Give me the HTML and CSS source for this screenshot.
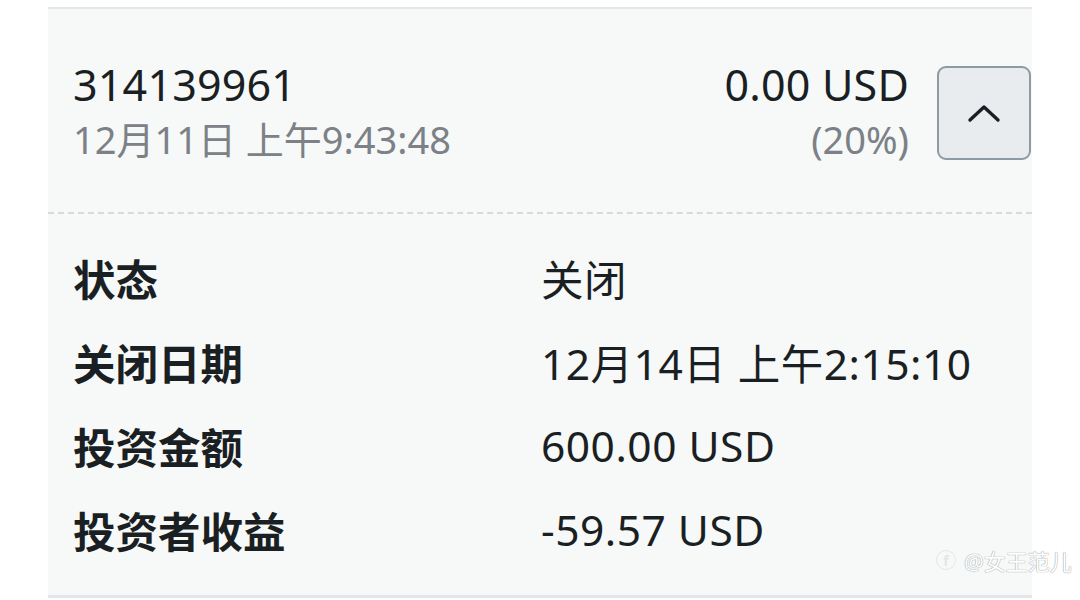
FILE: index.html
```html
<!DOCTYPE html>
<html lang="zh-CN">
<head>
  <meta charset="UTF-8" />
  <meta name="viewport" content="width=device-width, initial-scale=1.0" />
  <title>订单详情</title>
  <link rel="stylesheet" href="styles.css">
</head>
<body>
  <div class="card">
    <div class="card-head">
      <div class="head-left">
        <div class="order-id">314139961</div>
        <div class="sub">12月11日 上午9:43:48</div>
      </div>
      <div class="head-right">
        <div class="amount">0.00 USD</div>
        <div class="sub">(20%)</div>
      </div>
      <button class="toggle" aria-label="收起">
        <svg width="34" height="20" viewBox="0 0 34 20">
          <path d="M3 17 L17 4 L31 17" fill="none" stroke="#1a1f23" stroke-width="3.4" stroke-linecap="round" stroke-linejoin="round"/>
        </svg>
      </button>
    </div>

    <div class="details">
      <div class="row"><span class="label">状态</span><span class="value">关闭</span></div>
      <div class="row"><span class="label">关闭日期</span><span class="value">12月14日 上午2:15:10</span></div>
      <div class="row"><span class="label">投资金额</span><span class="value">600.00 USD</span></div>
      <div class="row"><span class="label">投资者收益</span><span class="value">-59.57 USD</span></div>
    </div>
  </div>

  <!-- watermark over the corner -->
  <div class="watermark">
    <span class="wm-icon">f</span>
    <span class="wm-text">@女王范儿</span>
  </div>
</body>
</html>
```

FILE: styles.css
```css
body {
  margin: 0;
  background: #ffffff;
  color: #1a1f23;
  font-family: "Noto Sans", "Noto Sans CJK SC", sans-serif;
  overflow: hidden;
}

.card {
  margin: 7px 0 0 48px;
  width: 984px;
  height: 591px;
  box-sizing: border-box;
  background: #f7f8f8;
  border-top: 2px solid #e2e6e9;
  border-bottom: 3px solid #e2e6e9;
}

.card-head {
  display: flex;
  align-items: center;
  padding: 49px 1px 45px 25px;
  border-bottom: 2px dashed #d6dadd;
}
.head-left {
  flex: 1;
}
.head-right {
  text-align: right;
  margin-right: 28px;
}
.order-id,
.amount {
  font-size: 43px;
  line-height: 54px;
  letter-spacing: 0.2px;
}
.sub {
  font-size: 38px;
  line-height: 55px;
  color: #7b8186;
}

.toggle {
  width: 94px;
  height: 94px;
  box-sizing: border-box;
  border: 2px solid #8d99a3;
  border-radius: 9px;
  background: #e8ecef;
  display: flex;
  align-items: center;
  justify-content: center;
  padding: 0;
}

.details {
  padding: 21px 0 0 25px;
}
.row {
  display: flex;
  align-items: center;
  height: 84px;
  font-size: 42.5px;
}
.label {
  width: 468px;
  font-weight: 700;
}
.value {
  letter-spacing: 0.5px;
}

.watermark {
  position: absolute;
  left: 936px;
  top: 544px;
  display: flex;
  align-items: center;
  gap: 8px;
  white-space: nowrap;
}
.wm-icon {
  width: 18px;
  height: 18px;
  border-radius: 50%;
  border: 1.5px solid #e4e6e8;
  color: #e4e6e8;
  font-size: 14px;
  font-weight: 700;
  display: flex;
  align-items: center;
  justify-content: center;
}
.wm-text {
  font-size: 22px;
  color: #ffffff;
  text-shadow: 0 0 1px #9a9ea2, 0 0 1px #9a9ea2;
}
```
